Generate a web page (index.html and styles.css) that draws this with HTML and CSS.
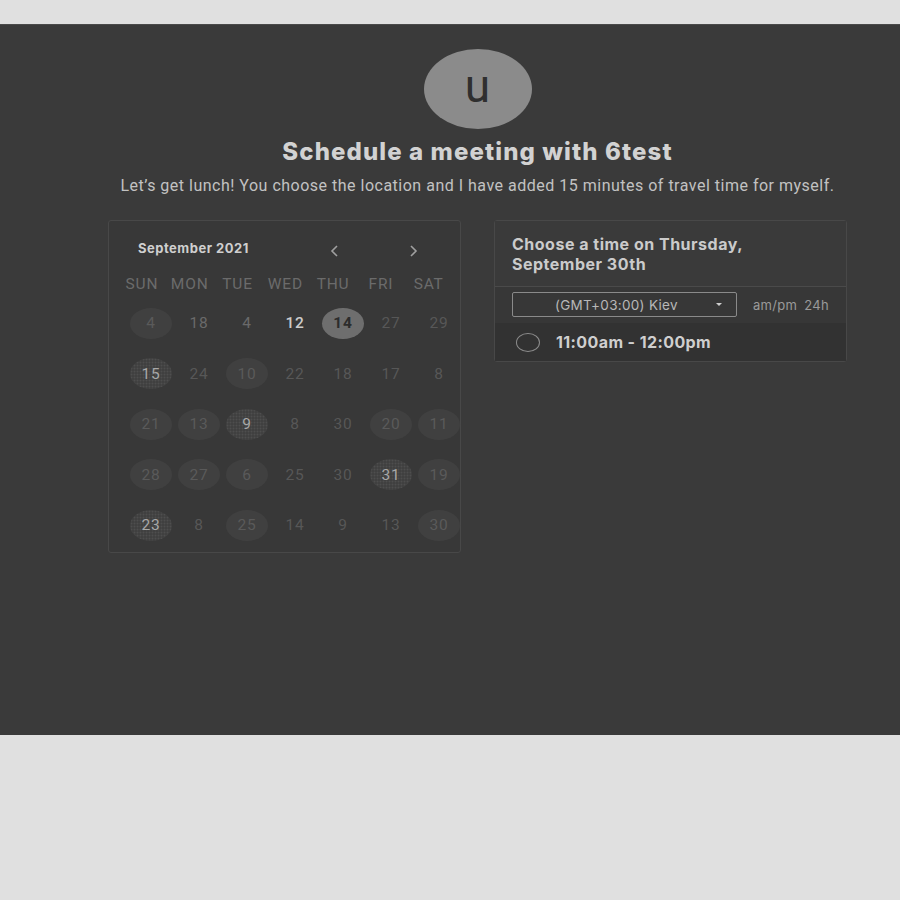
FILE: index.html
```html
<!DOCTYPE html>
<html>
<head>
<meta charset="utf-8">
<link rel="stylesheet" href="styles.css">
</head>
<body>
<div class="topbar"></div>
<main class="panel">
  <div class="wrap">
    <div class="avatar"><span>u</span></div>
    <h1 class="title">Schedule a meeting with 6test</h1>
    <p class="subtitle">Let’s get lunch! You choose the location and I have added 15 minutes of travel time for myself.</p>
    <div class="cards">
      <section class="cal">
        <div class="cal-head">
          <span class="month">September 2021</span>
          <svg class="arrow prev" width="10" height="12" viewBox="0 0 10 12"><polyline points="7,1 2,6 7,11" fill="none" stroke="#a0a0a0" stroke-width="1.6"/></svg>
          <svg class="arrow next" width="10" height="12" viewBox="0 0 10 12"><polyline points="3,1 8,6 3,11" fill="none" stroke="#a0a0a0" stroke-width="1.6"/></svg>
        </div>
        <div class="weekdays">
          <span>SUN</span><span>MON</span><span>TUE</span><span>WED</span><span>THU</span><span>FRI</span><span>SAT</span>
        </div>
        <div class="days">
          <span class="d c">4</span><span class="d m">18</span><span class="d m">4</span><span class="d hi">12</span><span class="d sel">14</span><span class="d">27</span><span class="d">29</span>
          <span class="d t">15</span><span class="d">24</span><span class="d c">10</span><span class="d">22</span><span class="d">18</span><span class="d">17</span><span class="d">8</span>
          <span class="d c">21</span><span class="d c">13</span><span class="d t">9</span><span class="d">8</span><span class="d">30</span><span class="d c">20</span><span class="d c">11</span>
          <span class="d c">28</span><span class="d c">27</span><span class="d c">6</span><span class="d">25</span><span class="d">30</span><span class="d t">31</span><span class="d c">19</span>
          <span class="d t">23</span><span class="d">8</span><span class="d c">25</span><span class="d">14</span><span class="d">9</span><span class="d">13</span><span class="d c">30</span>
        </div>
      </section>
      <section class="times">
        <div class="times-head">Choose a time on Thursday,<br>September 30th</div>
        <div class="tz-row">
          <div class="tz-select"><span>(GMT+03:00) Kiev</span><i class="caret"></i></div>
          <div class="fmt"><span>am/pm</span><span>24h</span></div>
        </div>
        <div class="slot">
          <span class="radio"></span>
          <span class="slot-text">11:00am - 12:00pm</span>
        </div>
      </section>
    </div>
  </div>
</main>
</body>
</html>
```
FILE: styles.css
```css
html, body { margin: 0; padding: 0; }
body {
  background: #e0e0e0;
  font-family: Roboto, "Liberation Sans", sans-serif;
}
.topbar { height: 24px; }
.panel {
  height: 711px;
  background: #3a3a3a;
  box-shadow: 0 1px 0 #555;
  border-top: 1px solid #4a4a4a;
  box-sizing: border-box;
}
.wrap {
  margin-left: 108px;
  width: 739px;
  display: flex;
  flex-direction: column;
  align-items: center;
  padding-top: 24px;
}
.avatar {
  width: 108px;
  height: 80px;
  border-radius: 50%;
  background: #8b8b8b;
  display: flex;
  align-items: center;
  justify-content: center;
}
.avatar span {
  color: #2f2f2f;
  font-family: Roboto, sans-serif;
  font-size: 46px;
  line-height: 1;
  margin-top: -6px;
}
.title {
  margin: 10px 0 0;
  font-family: Inter, sans-serif;
  font-weight: 800;
  font-size: 24px;
  line-height: 26px;
  color: #d2d2d2;
  letter-spacing: 1.1px;
}
.subtitle {
  margin: 11px 0 0;
  font-size: 16px;
  line-height: 20px;
  color: #c2c2c2;
  letter-spacing: 0.5px;
  white-space: nowrap;
}
.cards {
  align-self: stretch;
  display: flex;
  gap: 33px;
  margin-top: 24px;
  align-items: flex-start;
}
.cal {
  width: 351px;
  height: 314px;
  border: 1px solid #484848;
  border-radius: 3px;
  background: #383838;
  padding-top: 17px;
  box-sizing: content-box;
}
.cal-head {
  display: flex;
  align-items: center;
  height: 20px;
  padding-left: 29px;
}
.month {
  font-family: Inter, sans-serif;
  font-weight: 700;
  font-size: 13px;
  letter-spacing: 0.5px;
  color: #cfcfcf;
  width: 192px;
}
.arrow { margin-top: 6px; }
.prev { margin-left: 0; }
.next { margin-left: 68px; }
.weekdays {
  display: grid;
  grid-template-columns: repeat(7, 47.8px);
  margin-top: 14px;
  margin-left: 9px;
  height: 24px;
  align-items: center;
}
.weekdays span {
  text-align: center;
  font-size: 15.5px;
  color: #6b6b6b;
  letter-spacing: 0.8px;
}
.days {
  display: grid;
  grid-template-columns: repeat(7, 48px);
  grid-auto-rows: 50.5px;
  margin-left: 18px;
  margin-top: 2px;
  width: 336px;
}
.d {
  justify-self: center;
  align-self: center;
  width: 42px;
  height: 31px;
  border-radius: 50%;
  display: flex;
  align-items: center;
  justify-content: center;
  font-size: 15.5px;
  letter-spacing: 0.8px;
  color: #575757;
}
.d.m { color: #6a6a6a; }
.d.hi { color: #cccccc; font-weight: 500; }
.d.c { background: #404040; color: #5a5a5a; }
.d.t {
  background: radial-gradient(circle, #4e4e4e 0.7px, transparent 1.2px) 0 0 / 3px 3px, #404040;
  color: #a8a8a8;
}
.d.sel { background: #6e6e6e; color: #2c2c2c; font-weight: 700; }
.times {
  width: 351px;
  border: 1px solid #484848;
  border-radius: 3px;
  background: #383838;
}
.times-head {
  padding: 13px 17px 12px;
  font-family: Inter, sans-serif;
  font-weight: 700;
  font-size: 16px;
  letter-spacing: 0.5px;
  line-height: 20px;
  color: #cbcbcb;
  border-bottom: 1px solid #4a4a4a;
  background: #3a3a3a;
}
.tz-row {
  display: flex;
  align-items: center;
  padding: 5px 17px 6px;
  background: #373737;
}
.tz-select {
  width: 225px;
  height: 25px;
  border: 1px solid #8a8a8a;
  border-radius: 2px;
  display: flex;
  align-items: center;
  position: relative;
  box-sizing: border-box;
}
.tz-select span {
  margin-left: 42px;
  font-family: Inter, sans-serif;
  font-size: 13.5px;
  letter-spacing: 0.3px;
  color: #b8b8b8;
}
.caret {
  position: absolute;
  right: 14px;
  top: 10px;
  width: 0;
  height: 0;
  border-left: 3px solid transparent;
  border-right: 3px solid transparent;
  border-top: 3px solid #cfcfcf;
}
.fmt {
  margin-left: 16px;
  display: flex;
  gap: 7px;
  font-family: Inter, sans-serif;
  font-size: 13px;
  letter-spacing: 0.3px;
  color: #9a9a9a;
}
.slot {
  height: 38px;
  background: #323232;
  display: flex;
  align-items: center;
  padding-left: 21px;
}
.radio {
  width: 22px;
  height: 17px;
  border: 1.5px solid #8c8c8c;
  border-radius: 50%;
}
.slot-text {
  margin-left: 16px;
  font-family: Inter, sans-serif;
  font-weight: 700;
  font-size: 16px;
  letter-spacing: 0.4px;
  color: #cfcfcf;
}
```
